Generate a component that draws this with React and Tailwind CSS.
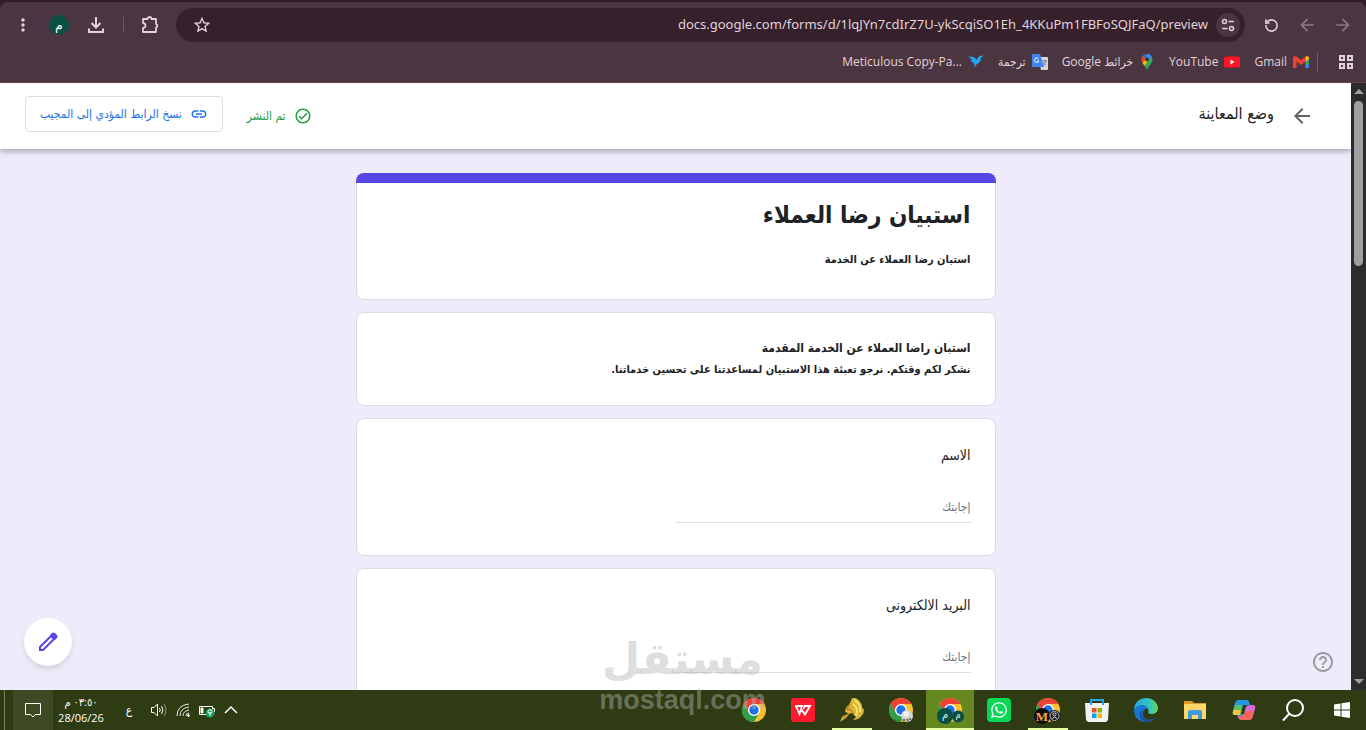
import React, { useState } from "react";
import {
  MdArrowBack,
  MdArrowForward,
  MdHelpOutline,
  MdLink,
  MdMoreVert,
  MdOutlineCheckCircle,
  MdStarBorder,
} from "react-icons/md";
import { FaWhatsapp } from "react-icons/fa";
import { RotateCcw } from "lucide-react";

const questions = [
  { id: "name", label: "الاسم" },
  { id: "email", label: "البريد الالكترونى" },
];

const ChromeLogo = ({ children }) => (
  <svg viewBox="0 0 24 24" className="h-6 w-6 overflow-visible">
    <circle cx="12" cy="12" r="12" fill="#fbc02d" />
    <path d="M1.6 6A12 12 0 0 1 22.4 6H12L6.8 15Z" fill="#ea4335" />
    <path d="M1.6 6A12 12 0 0 0 12 24L17.2 15 12 17.5 6.8 15Z" fill="#2e9e4b" />
    <circle cx="12" cy="12" r="6" fill="#fff" />
    <circle cx="12" cy="12" r="4.7" fill="#1a73e8" />
    {children}
  </svg>
);

const ProfileBadges = () => (
  <ChromeLogo>
    <circle cx="7" cy="18" r="8" fill="#0a4f43" />
    <circle cx="20" cy="18.5" r="6" fill="#0a4f43" />
    <text x="7" y="20" fontSize="11" fill="#dcefe9" textAnchor="middle">م</text>
    <text x="20" y="20" fontSize="9" fill="#dcefe9" textAnchor="middle">م</text>
  </ChromeLogo>
);

const WorkBadges = () => (
  <ChromeLogo>
    <circle cx="6" cy="18" r="8" fill="#120b08" />
    <circle cx="18.5" cy="18" r="6" fill="#17191c" />
    <circle cx="18.5" cy="18" r="4.5" fill="none" stroke="#b9bec4" />
    <circle cx="18.5" cy="16.5" r="1.5" fill="none" stroke="#d8dce0" />
    <path d="M16 20.5q2.5-3 5 0" fill="none" stroke="#d8dce0" />
    <text x="6" y="22.5" fontSize="13" fontWeight="700" fill="#f7a94b" textAnchor="middle" fontFamily="Liberation Serif, serif">
      M
    </text>
  </ChromeLogo>
);

const GuestBadge = () => (
  <ChromeLogo>
    <circle cx="18" cy="18" r="6" fill="#d3d3cd" />
    <circle cx="17" cy="16" r="3" fill="#f0f0ed" />
    <path d="M15 23v-2M18 21l1 2M21 20v2" fill="none" stroke="#4d4c40" strokeWidth="1.5" />
    <path d="M6 21v2M9 22v1.5" fill="none" stroke="#1f6b33" />
  </ChromeLogo>
);

const WpsLogo = () => (
  <svg viewBox="0 0 24 24" className="h-6 w-6">
    <rect width="24" height="24" rx="3" fill="#ff1a2d" />
    <path
      d="M4 8h7L8.5 16 5 8M10 11l4 5.5L19 8h-5.5l-1 3"
      fill="none"
      stroke="#fff"
      strokeWidth="1.8"
    />
  </svg>
);

const HorseLogo = () => (
  <svg viewBox="0 0 24 24" className="h-6 w-6">
    <path d="M12 0h3c5 2 7 6 7 9l2 3c0 5-5 10-11 10l3-3-4-4c-3 0-4 3-6 5l-6 4 2-5c2-2 5-2 6-4l-3-1 1-4 4-5Z" fill="#d9b536" />
    <path d="M14 2c5 2 7 7 6 12M13 6c3 2 5 6 3 12" fill="none" stroke="#f2e468" strokeWidth="2" />
    <path d="m10 6-3 5 4 1 3 4M9 15l-6 6" fill="none" stroke="#b36a1c" />
  </svg>
);

const StoreLogo = () => (
  <svg viewBox="0 0 24 24" className="h-6 w-6">
    <path d="M0 5h24l-1 17-2 2H3l-2-2Z" fill="#f1f1f3" />
    <path d="M6 7V2h12v5" fill="none" stroke="#2ba4e8" strokeWidth="2" />
    <path d="M7 10h4.5v4.5H7z" fill="#f25022" />
    <path d="M12.5 10H17v4.5h-4.5z" fill="#7fba00" />
    <path d="M7 15.5h4.5V20H7z" fill="#00a4ef" />
    <path d="M12.5 15.5H17V20h-4.5z" fill="#ffb900" />
  </svg>
);

const EdgeLogo = () => (
  <svg viewBox="0 0 24 24" className="h-6 w-6">
    <defs>
      <linearGradient id="edgeTop" x1="0" x2="1">
        <stop stopColor="#25a6dc" />
        <stop offset=".6" stopColor="#33c2c8" />
        <stop offset="1" stopColor="#63d45a" />
      </linearGradient>
    </defs>
    <path d="M0 12C0 5 5 0 12 0s12 5 12 10c0 4-3 6-6.5 6-3 0-4-1-3-3C15 8 5 4 0 12Z" fill="url(#edgeTop)" />
    <path d="M0 12C3 6 12 5 14 11c-3-1-6 2-5 6 1 5 7 6 12 3-3 4-9 5-13 3.5C3 22 0 18 0 12Z" fill="#1b74d0" />
    <path d="M9 11c-3 5 0 11 6 11 3 0 5-1 7-3-3 4-7 5.5-11 5-6-2-7-9-2-13Z" fill="#1f4e9f" />
  </svg>
);

const FolderLogo = () => (
  <svg viewBox="0 0 24 24" className="h-6 w-6">
    <path d="M1 3h8l2 2h12v15H1z" fill="#dc9a22" />
    <path d="M1 6h22v15H1z" fill="#ffd667" />
    <path d="M5 21v-8l2-1h10l2 1v8h-4v-4H9v4z" fill="#3d9be0" />
  </svg>
);

const CopilotLogo = () => (
  <svg viewBox="0 0 24 24" className="h-6 w-6">
    <path d="M6 2h9q2 0 3 5h-3q-2 0-3 4l-2 8q-1 3-4 1L5 17H3q-3 0-2-4l2-8q1-3 3-3Z" fill="#2399e5" />
    <path d="M3 7h7L8 17H3q-3 0-2-4Z" fill="#62bd61" />
    <path d="M2 12h7l-1 5H3q-3 0-2-4Z" fill="#f1c63a" />
    <path d="M18 7h3q3 0 2 4l-2 7q-1 4-4 4H9q-2 0-3-4h3q2 0 3-4l2-5q1-2 4-2Z" fill="#d66bdc" />
    <path d="M13 13h9l-1 5q-1 4-4 4H9q-2 0-3-4h3q2 0 4-5Z" fill="#f4655e" />
    <path d="M11 7h3l-2 9H9Z" fill="#2f3b12" />
  </svg>
);

const WindowsLogo = () => (
  <svg viewBox="0 0 16 16" className="h-4 w-4" fill="#fff">
    <path d="M0 2.5 6.5 1.5v6H0zM7.5 1.3 16 0v7.5H7.5zM0 8.5h6.5v6L0 13.5zM7.5 8.5H16V16l-8.5-1.3z" />
  </svg>
);

const SearchIcon = () => (
  <svg viewBox="0 0 24 24" className="h-6 w-6" fill="none" stroke="#fff" strokeWidth="2">
    <circle cx="14" cy="10" r="8" />
    <path d="m8 16-6 6.5" />
  </svg>
);

const WhatsappLogo = () => (
  <span className="flex h-6 w-6 items-center justify-center rounded-sm bg-[#06d755]">
    <FaWhatsapp className="h-[18px] w-[18px] text-white" />
  </span>
);

const taskbarApps = [
  { name: "ابدأ", Logo: WindowsLogo },
  { name: "بحث", Logo: SearchIcon },
  { name: "Copilot", Logo: CopilotLogo },
  { name: "File Explorer", Logo: FolderLogo },
  { name: "Edge", Logo: EdgeLogo },
  { name: "Store", Logo: StoreLogo },
  { name: "Chrome work", Logo: WorkBadges, open: true },
  { name: "WhatsApp", Logo: WhatsappLogo },
  { name: "Chrome forms", Logo: ProfileBadges, open: true, active: true },
  { name: "Chrome guest", Logo: GuestBadge },
  { name: "Navicat", Logo: HorseLogo, open: true },
  { name: "WPS", Logo: WpsLogo },
  { name: "Chrome", Logo: ChromeLogo },
];

const GmailIcon = () => (
  <svg viewBox="0 0 16 16" className="h-4 w-4">
    <path d="M0 4v9q0 1 1 1h2.5V6z" fill="#ea4335" />
    <path d="M16 4v9q0 1-1 1h-2.5V6z" fill="#4285f4" />
    <path d="M12.5 9 16 6v4l-3.5 1z" fill="#34a853" />
    <path d="M0 3.5q1-2.5 3.5-1L8 6l4.5-3.5V7.5L8 11 3.5 7.5 0 5z" fill="#ea4335" />
    <path d="M12.5 2.5v5L16 5V3.5q-1-2.5-3.5-1z" fill="#fbbc04" />
  </svg>
);

const YoutubeIcon = () => (
  <svg viewBox="0 0 16 16" className="h-4 w-4">
    <rect y="2.5" width="16" height="11" rx="2" fill="#ff1428" />
    <path d="m6.5 5.5 4 2.5-4 2.5z" fill="#fff" />
  </svg>
);

const MapsIcon = () => (
  <svg viewBox="0 0 16 16" className="h-4 w-4">
    <path d="M8 0a5.5 5.5 0 0 1 5.5 5.5C13.5 9.5 10 11 8 16 6 11 2.5 9.5 2.5 5.5A5.5 5.5 0 0 1 8 0Z" fill="#34a853" />
    <path d="M8 0a5.5 5.5 0 0 1 5.2 4L8 5.5z" fill="#4285f4" />
    <path d="M8 0a5.5 5.5 0 0 0-4.3 2L7 5z" fill="#1a73e8" />
    <path d="M3.7 2 7 5 3.5 9Q1.5 5 3.7 2z" fill="#ea4335" />
    <path d="m3.5 9 3-3.5L9 7l-3.5 4.5z" fill="#fbbc04" />
    <circle cx="8" cy="5.5" r="2" fill="#4b3540" />
  </svg>
);

const TranslateIcon = () => (
  <svg viewBox="0 0 16 16" className="h-4 w-4">
    <path d="M6 3h9q1 0 1 1v11q0 1-1 1H9z" fill="#d4d6d8" />
    <path d="M0 1q0-1 1-1h7l4 13H1q-1 0-1-1z" fill="#4285f4" />
    <path d="M6.5 5A2.2 2.2 0 1 0 6.7 7H5" fill="none" stroke="#fff" />
    <path d="M10 7h5M12.5 6v1m1.5 0q-1 3-3 4.5m0-3 3 3" fill="none" stroke="#667b8f" />
  </svg>
);

const BirdIcon = () => (
  <svg viewBox="0 0 16 16" className="h-4 w-4">
    <path d="M0 2.5 6 3l2.5 3L10 3.5 12 2l4-.5-3 2q0 5-4 6.5l-3 3.5.5-3.5Q4 8 2 5.5l3 .5Z" fill="#22a8f0" />
  </svg>
);

const bookmarks = [
  { label: "Gmail", Icon: GmailIcon },
  { label: "YouTube", Icon: YoutubeIcon },
  { label: "خرائط Google", Icon: MapsIcon, dir: "rtl" },
  { label: "ترجمة", Icon: TranslateIcon, dir: "rtl" },
  { label: "Meticulous Copy-Pa...", Icon: BirdIcon },
];

const PuzzleIcon = () => (
  <svg viewBox="0 0 20 20" className="h-5 w-5" fill="none" stroke="currentColor" strokeWidth="1.8">
    <path d="M3 4h4.5a2 2 0 0 1 4 0H16v5a1.8 1.8 0 0 1 0 3.5V17H3v-4q2.5-.5 2.5-2.5T3 8Z" strokeLinejoin="round" />
  </svg>
);

const DownloadIcon = () => (
  <svg viewBox="0 0 18 18" className="h-[18px] w-[18px]" fill="none" stroke="currentColor" strokeWidth="2">
    <path d="M9 1v10M4.5 7 9 11.5 13.5 7M2 12.5V16h14v-3.5" />
  </svg>
);

const PencilIcon = () => (
  <svg viewBox="0 0 20 20" className="h-5 w-5">
    <path d="M2 18v-3L13 4l3 3L5 18Z" fill="none" stroke="currentColor" strokeWidth="2" />
    <path d="m12 3 2-2q1.5-1 3 0l2 2q1 1.5 0 3l-2 2z" fill="currentColor" />
  </svg>
);

const BrowserBar = () => {
  const [url, setUrl] = useState(
    "docs.google.com/forms/d/1lqJYn7cdIrZ7U-ykScqiSO1Eh_4KKuPm1FBFoSQJFaQ/preview"
  );

  return (
    <header className="border-b border-[#5b4650] bg-[#301d29] pt-0.5 text-[#e0d3d9]">
      <div className="rounded-t-lg bg-[#4b3540]">
        <div className="flex h-[46px] items-center gap-4 px-[13px]">
          <button aria-label="إلى الأمام" className="text-[#8c7a83]">
            <MdArrowForward size={20} />
          </button>
          <button aria-label="رجوع" className="text-[#8c7a83]">
            <MdArrowBack size={20} />
          </button>
          <button aria-label="إعادة تحميل" className="flex w-5 justify-center">
            <RotateCcw size={15} strokeWidth={2.5} />
          </button>
          <div className="flex h-[34px] flex-1 items-center gap-2 rounded-full bg-[#35202c] pr-[5px] pl-4">
            <button aria-label="معلومات الموقع" className="flex h-6 w-6 items-center justify-center rounded-full bg-[#4b3540]">
              <svg viewBox="0 0 14 14" className="h-3.5 w-3.5" fill="none" stroke="currentColor" strokeWidth="1.5">
                <circle cx="3.5" cy="3.5" r="2" />
                <circle cx="10.5" cy="10.5" r="2" />
                <path d="M7.5 3.5H13M1 10.5h5.5" />
              </svg>
            </button>
            <input
              aria-label="شريط العناوين"
              dir="ltr"
              value={url}
              onChange={(e) => setUrl(e.target.value)}
              className="min-w-0 flex-1 bg-transparent text-right font-['Noto_Sans',sans-serif] text-[13px] outline-none"
            />
            <button aria-label="إضافة إشارة">
              <MdStarBorder size={20} />
            </button>
          </div>
          <button aria-label="الإضافات">
            <PuzzleIcon />
          </button>
          <span className="h-4 w-px bg-[#6d5963]" />
          <button aria-label="التنزيلات" className="flex w-[22px] justify-center">
            <DownloadIcon />
          </button>
          <button
            aria-label="الملف الشخصي"
            className="flex h-5 w-5 items-center justify-center rounded-full bg-[#0a4f43] text-sm leading-4 text-white"
          >
            م
          </button>
          <button aria-label="المزيد">
            <MdMoreVert size={20} />
          </button>
        </div>

        <nav className="flex h-[34px] items-start px-3 pt-1 text-xs">
          <button aria-label="كل التطبيقات" className="mt-0.5 ml-5">
            <svg viewBox="0 0 16 16" className="h-4 w-4" fill="none" stroke="currentColor" strokeWidth="2">
              <path d="M2 2h4v4H2zM10 2h4v4h-4zM2 10h4v4H2zM10 10h4v4h-4z" />
            </svg>
          </button>
          <div className="flex gap-3.5 border-r border-[#6d5963] pr-2">
            {bookmarks.map(({ label, Icon, dir = "ltr" }) => (
              <a key={label} href="#" className="flex h-5 items-center gap-1.5">
                <Icon />
                <span dir={dir}>{label}</span>
              </a>
            ))}
          </div>
        </nav>
      </div>
    </header>
  );
};

const FormHeader = () => (
  <div className="relative flex h-[66px] shrink-0 items-center justify-between bg-white pr-[37px] pl-[25px] shadow-[0_2px_6px_rgba(60,60,80,0.45)]">
    <div className="flex items-center gap-4">
      <button aria-label="رجوع" className="text-[#5f6368]">
        <MdArrowBack size={24} />
      </button>
      <h2 className="pb-1 text-base text-[#202124]">وضع المعاينة</h2>
    </div>
    <div className="flex items-center gap-6">
      <span className="flex items-center gap-2 text-xs text-[#1e9e45]">
        <MdOutlineCheckCircle size={18} />
        تم النشر
      </span>
      <button className="mb-1 flex h-9 items-center gap-2 rounded border border-[#dadce0] px-3.5 text-xs text-[#1a73e8]">
        <MdLink size={18} />
        نسخ الرابط المؤدي إلى المجيب
      </button>
    </div>
  </div>
);

const Card = ({ children, className = "" }) => (
  <section className={`rounded-lg border border-[#dadce0] bg-white px-6 ${className}`}>
    {children}
  </section>
);

const Question = ({ id, label }) => {
  const [answer, setAnswer] = useState("");

  return (
    <Card className="pt-6 pb-8">
      <label htmlFor={id} className="block text-sm leading-6 text-[#202124]">
        {label}
      </label>
      <input
        id={id}
        value={answer}
        onChange={(e) => setAnswer(e.target.value)}
        placeholder="إجابتك"
        className="mt-6 block h-8 w-1/2 border-b border-[#dadce0] text-xs outline-none placeholder:text-[#70757a]"
      />
    </Card>
  );
};

const Scrollbar = () => (
  <div className="flex w-[15px] shrink-0 flex-col items-center justify-between bg-[#2c2c2c] py-1.5 text-[#9f9f9f]">
    <div className="flex flex-col items-center gap-[7px]">
      <svg viewBox="0 0 10 5" className="h-[5px] w-2.5" fill="currentColor">
        <path d="M0 5 5 0l5 5z" />
      </svg>
      <div className="h-[165px] w-[9px] rounded-full bg-[#9f9f9f]" />
    </div>
    <svg viewBox="0 0 10 5" className="h-[5px] w-2.5" fill="currentColor">
      <path d="M0 0l5 5 5-5z" />
    </svg>
  </div>
);

const Watermark = () => (
  <div className="pointer-events-none absolute bottom-3.5 left-[600px] flex w-[165px] flex-col items-center font-bold text-[#b4b4b4]/45">
    <span className="font-['DejaVu_Sans',sans-serif] text-[44px] leading-[52px]">مستقل</span>
    <span dir="ltr" className="font-['Liberation_Sans',sans-serif] text-[27px] leading-[31px]">
      mostaql.com
    </span>
  </div>
);

const Taskbar = () => (
  <footer className="flex h-10 shrink-0 items-stretch justify-between bg-[#2f3b12] text-white">
    <div className="flex gap-px">
      {taskbarApps.map(({ name, Logo, open, active }) => (
        <button
          key={name}
          aria-label={name}
          className={`relative flex w-12 items-center justify-center ${active ? "bg-[#668820]" : ""}`}
        >
          <Logo />
          {open && (
            <span className={`absolute bottom-0 h-0.5 bg-[#e6ffa0] ${active ? "w-12" : "w-10"}`} />
          )}
        </button>
      ))}
    </div>

    <div className="flex items-center">
      <div className="flex items-center gap-2">
        <svg viewBox="0 0 16 16" className="h-4 w-4" fill="none" stroke="#fff" strokeWidth="1.5">
          <path d="m2 11 6-6 6 6" />
        </svg>
        <svg viewBox="0 0 16 16" className="h-4 w-4" fill="none" stroke="#fff">
          <path d="M.5 4.5h13v8H.5zM14 6.5h1.5v3H14" />
          <path d="M2 6h2v5H2z" fill="#fff" />
          <circle cx="11" cy="11" r="4.5" fill="#18a058" stroke="none" />
          <path d="M11 14v-4M9 9.5q2-4 4 0 0 2-2 2t-2-2" />
        </svg>
        <svg viewBox="0 0 16 16" className="h-4 w-4" fill="none" stroke="#e4e8da">
          <path d="M2 14Q2 3 14 2M5 14q0-8 9-9M8 14q0-5 6-6M11 14q0-3 3-3" />
          <circle cx="13.5" cy="13.5" r="1" fill="#fff" />
        </svg>
        <svg viewBox="0 0 16 16" className="h-4 w-4" fill="none" stroke="#fff">
          <path d="M.5 5.5H3L6.5 2v12L3 10.5H.5zM8.5 6q1.5 2 0 4M10.5 4q3 4 0 8" />
          <path d="M13 2q4 6 0 12" stroke="#8e9678" />
        </svg>
        <span className="w-7 text-center text-xs">ع</span>
      </div>
      <div className="mr-1.5 w-14 text-center text-[11px] leading-4">
        <p>٠٣:٥٠ م</p>
        <p dir="ltr">28/06/26</p>
      </div>
      <button aria-label="الإشعارات" className="flex h-full w-10 items-center justify-center bg-[#3d4a24]">
        <svg viewBox="0 0 18 18" className="h-[18px] w-[18px]" fill="none" stroke="#fff">
          <path d="M1.5 2.5h15v11h-5L9 16l-2.5-2.5h-5z" />
        </svg>
      </button>
      <span className="mr-2 ml-1 h-full w-px bg-[#7c8466]" />
    </div>
  </footer>
);

const App = () => (
  <div
    dir="rtl"
    className="relative flex h-screen flex-col overflow-hidden bg-[#eeecfa] font-['Open_Sans','DejaVu_Sans_Condensed','DejaVu_Sans',sans-serif]"
  >
    <BrowserBar />

    <div className="flex min-h-0 flex-1 font-['DejaVu_Sans_Condensed','DejaVu_Sans',sans-serif]">
      <Scrollbar />
      <main className="relative flex min-w-0 flex-1 flex-col overflow-hidden">
        <FormHeader />

        <form className="mx-auto mt-6 w-full max-w-[640px] space-y-3">
          <Card className="relative border-t-0 pt-6 pb-7">
            <div className="absolute -inset-x-px top-0 h-2.5 rounded-t-lg bg-[#5646e4]" />
            <h1 className="text-2xl leading-9 font-bold text-[#202124]">استبيان رضا العملاء</h1>
            <p className="mt-4 text-[11px] leading-[22px] font-bold text-[#202124]">استبان رضا العملاء عن الخدمة</p>
          </Card>

          <Card className="py-6 font-bold text-[#202124]">
            <h3 className="text-xs leading-[22px]">استبان راضا العملاء عن الخدمة المقدمة</h3>
            <p className="text-[11px] leading-[22px]">
              نشكر لكم وقتكم. نرجو تعبئة هذا الاستبيان لمساعدتنا على تحسين خدماتنا.
            </p>
          </Card>

          {questions.map((q) => (
            <Question key={q.id} {...q} />
          ))}
        </form>

        <button
          aria-label="تعديل النموذج"
          className="absolute bottom-6 left-6 flex h-12 w-12 items-center justify-center rounded-full bg-white text-[#5646e4] shadow-md"
        >
          <PencilIcon />
        </button>
        <button aria-label="مساعدة" className="absolute right-4 bottom-4 text-[#9a9aa2]">
          <MdHelpOutline size={24} />
        </button>
      </main>
    </div>

    <Taskbar />
    <Watermark />
  </div>
);

export default App;
